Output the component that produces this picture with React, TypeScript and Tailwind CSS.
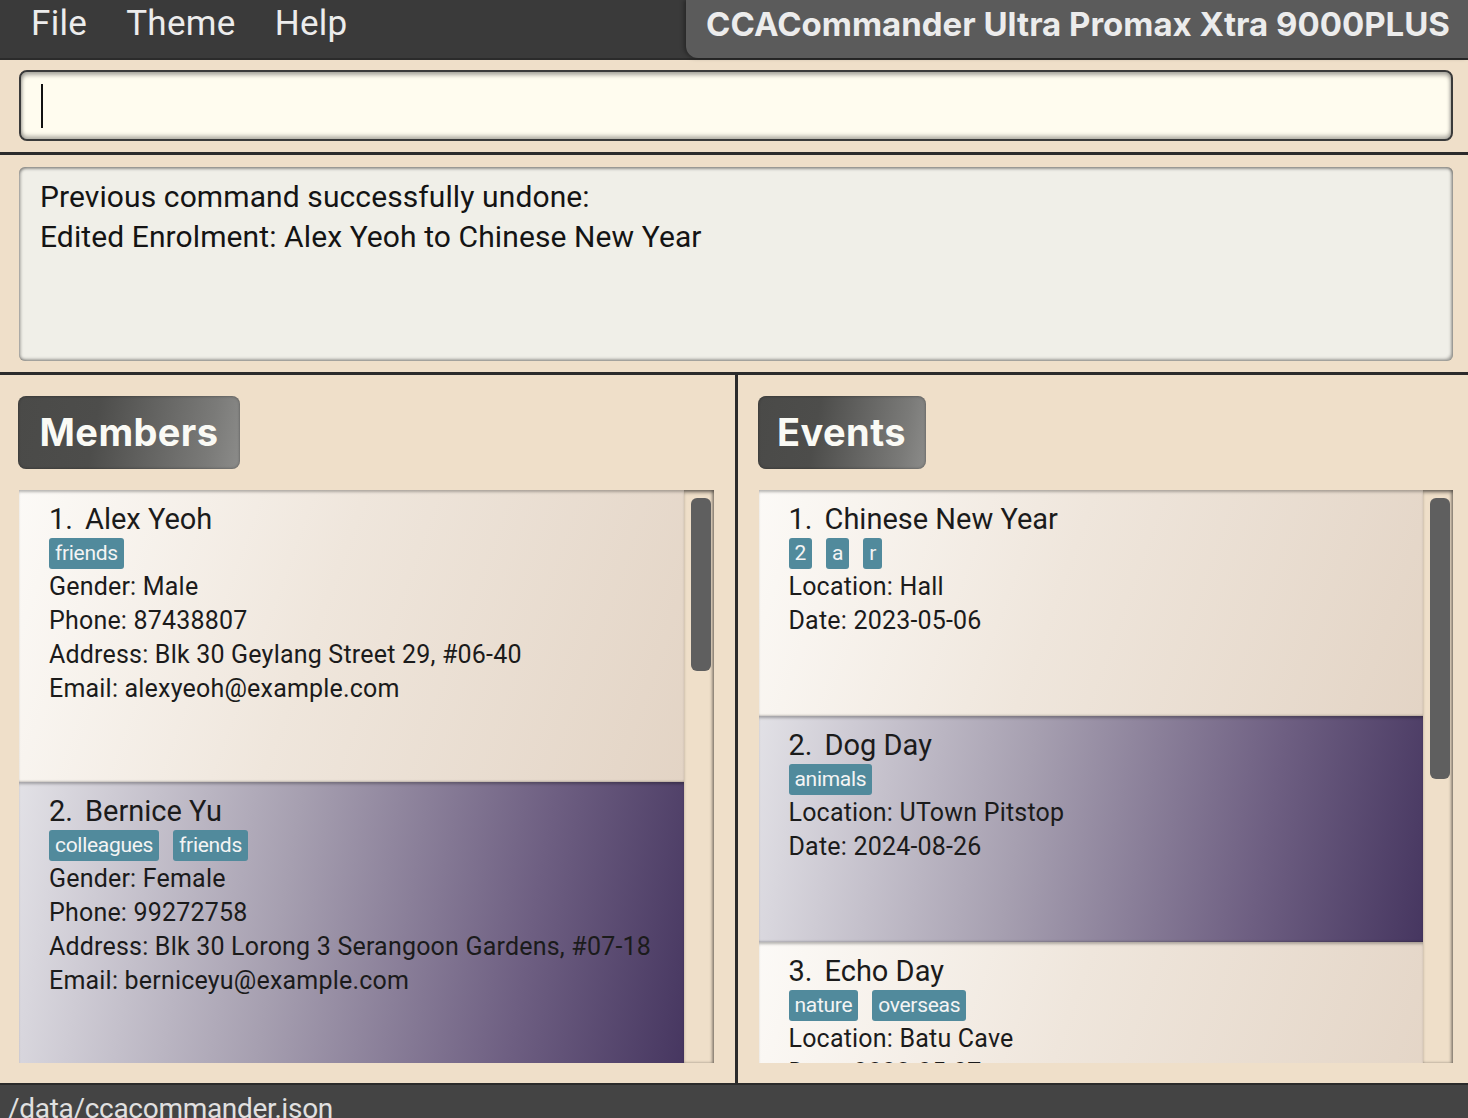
import React from "react";

type Member = {
  name: string;
  tags: string[];
  lines: string[];
  dark?: boolean;
};

const members: Member[] = [
  {
    name: "Alex Yeoh",
    tags: ["friends"],
    lines: [
      "Gender: Male",
      "Phone: 87438807",
      "Address: Blk 30 Geylang Street 29, #06-40",
      "Email: alexyeoh@example.com",
    ],
  },
  {
    name: "Bernice Yu",
    tags: ["colleagues", "friends"],
    lines: [
      "Gender: Female",
      "Phone: 99272758",
      "Address: Blk 30 Lorong 3 Serangoon Gardens, #07-18",
      "Email: berniceyu@example.com",
    ],
    dark: true,
  },
];

const events: Member[] = [
  {
    name: "Chinese New Year",
    tags: ["2", "a", "r"],
    lines: ["Location: Hall", "Date: 2023-05-06"],
  },
  {
    name: "Dog Day",
    tags: ["animals"],
    lines: ["Location: UTown Pitstop", "Date: 2024-08-26"],
    dark: true,
  },
  {
    name: "Echo Day",
    tags: ["nature", "overseas"],
    lines: ["Location: Batu Cave", "Date: 2023-05-07"],
  },
];

const body = "font-['Roboto','Liberation_Sans',sans-serif]";
const heading = "font-['Inter','Noto_Sans',sans-serif]";

function Card({ item, index, height }: { item: Member; index: number; height: string }) {
  const bg = item.dark
    ? "bg-[linear-gradient(100deg,#e2e1e6_0%,#a69fb0_40%,#6e5f82_75%,#463660_100%)]"
    : "bg-[linear-gradient(110deg,#fcfaf7_0%,#efe6dc_45%,#e3d4c5_100%)]";
  return (
    <div
      className={`${height} shrink-0 ${bg} shadow-[inset_0_3px_3px_-1px_rgba(0,0,0,0.28),inset_0_-2px_2px_-1px_rgba(0,0,0,0.2)] pl-[30px] pt-[12px] text-[#1b1b1b]`}
    >
      <div className="flex text-[29px] leading-[34px]">
        <span className="w-[36px]">{index}.</span>
        <span>{item.name}</span>
      </div>
      <div className="mt-[2px] flex gap-[14px]">
        {item.tags.map((t) => (
          <span
            key={t}
            className="h-[31px] rounded-[3px] bg-[#518a9c] px-[6px] text-[21px] leading-[31px] tracking-[-0.3px] text-[#f4f4f4]"
          >
            {t}
          </span>
        ))}
      </div>
      <div className="mt-[1px] text-[25px] leading-[34px] tracking-[0.2px]">
        {item.lines.map((l) => (
          <div key={l}>{l}</div>
        ))}
      </div>
    </div>
  );
}

function Panel({
  title,
  items,
  cardHeight,
  thumbHeight,
  labelWidth,
  withDivider,
}: {
  title: string;
  items: Member[];
  cardHeight: string;
  thumbHeight: string;
  labelWidth: string;
  withDivider?: boolean;
}) {
  return (
    <div
      className={`flex flex-1 flex-col pt-[21px] pb-[20px] ${
        withDivider ? "border-l-[3px] border-[#2b2b2b] pl-[21px] pr-[15px]" : "pl-[19px] pr-[21px]"
      }`}
    >
      <div
        className={`-ml-[1px] ${labelWidth} flex h-[73px] items-center justify-center rounded-[8px] bg-[linear-gradient(100deg,#4a4a48_0%,#4d4d4b_35%,#7a7a78_85%,#8c8c8a_100%)] shadow-[inset_0_0_3px_rgba(0,0,0,0.4)]`}
      >
        <span className={`${heading} text-[38px] font-bold tracking-[0.4px] text-[#fafaf5]`}>{title}</span>
      </div>
      <div className="mt-[21px] flex h-[573px] overflow-hidden shadow-[inset_0_2px_4px_rgba(0,0,0,0.35)]">
        <div className="flex flex-1 flex-col overflow-hidden">
          {items.map((it, i) => (
            <Card key={it.name} item={it} index={i + 1} height={cardHeight} />
          ))}
        </div>
        <div className="w-[30px] shrink-0 shadow-[inset_-2px_0_3px_rgba(0,0,0,0.25),inset_0_2px_3px_rgba(0,0,0,0.25)] pl-[7px] pt-[8px]">
          <div className={`${thumbHeight} w-[20px] rounded-[6px] bg-[#5f5f5f]`} />
        </div>
      </div>
    </div>
  );
}

export default function App() {
  return (
    <div className={`flex h-[1118px] w-full flex-col overflow-hidden bg-[#efdfc9] ${body}`}>
      {/* menu bar */}
      <div className="flex h-[60px] shrink-0 border-b-2 border-[#2b2b2b] bg-[#3a3a3a]">
        <div className="flex items-start gap-[39px] pl-[31px] pt-[2px] text-[35px] leading-[44px] tracking-[0.3px] text-[#ececec]">
          <span>File</span>
          <span>Theme</span>
          <span>Help</span>
        </div>
        <div className="ml-auto flex h-full w-[782px] items-start rounded-bl-[12px] bg-[#5b5b5b] pl-[20px] pt-[3px] shadow-[-2px_0_4px_rgba(0,0,0,0.35)]">
          <span className={`${heading} text-[33px] font-bold leading-[42px] tracking-[0px] text-[#ececec]`}>
            CCACommander Ultra Promax Xtra 9000PLUS
          </span>
        </div>
      </div>

      {/* command box */}
      <div className="shrink-0 border-b-[3px] border-[#2b2b2b] pb-[11px] pl-[19px] pr-[15px] pt-[10px]">
        <div className="flex h-[71px] items-center rounded-[8px] border-2 border-[#3a3a3a] bg-[#fffcef] pl-[20px] shadow-[inset_0_3px_4px_rgba(0,0,0,0.35),inset_0_-3px_4px_rgba(0,0,0,0.3)]">
          <div className="h-[44px] w-[2px] bg-[#111]" />
        </div>
      </div>

      {/* result box */}
      <div className="shrink-0 border-b-[3px] border-[#2b2b2b] pb-[11px] pl-[19px] pr-[15px] pt-[12px]">
        <div className="h-[194px] rounded-[6px] bg-[#f0efe8] pl-[21px] pt-[10px] text-[30px] leading-[40px] tracking-[0.1px] text-[#141414] shadow-[inset_0_2px_3px_rgba(0,0,0,0.35),inset_-2px_-2px_3px_rgba(0,0,0,0.3),inset_2px_0_3px_rgba(0,0,0,0.2)]">
          <div>Previous command successfully undone:</div>
          <div>Edited Enrolment: Alex Yeoh to Chinese New Year</div>
        </div>
      </div>

      {/* lists */}
      <div className="flex min-h-0 flex-1">
        <Panel
          title="Members"
          items={members}
          cardHeight="h-[292px]"
          thumbHeight="h-[173px]"
          labelWidth="w-[222px]"
        />
        <Panel
          title="Events"
          items={events}
          cardHeight="h-[226px]"
          thumbHeight="h-[281px]"
          labelWidth="w-[168px]"
          withDivider
        />
      </div>

      {/* status bar */}
      <div className="h-[35px] shrink-0 overflow-hidden border-t-2 border-[#2b2b2b] bg-[#444444] pl-[8px] pt-[7px] text-[28px] leading-[34px] tracking-[-0.3px] text-[#e0e0e0]">
        /data/ccacommander.json
      </div>
    </div>
  );
}
